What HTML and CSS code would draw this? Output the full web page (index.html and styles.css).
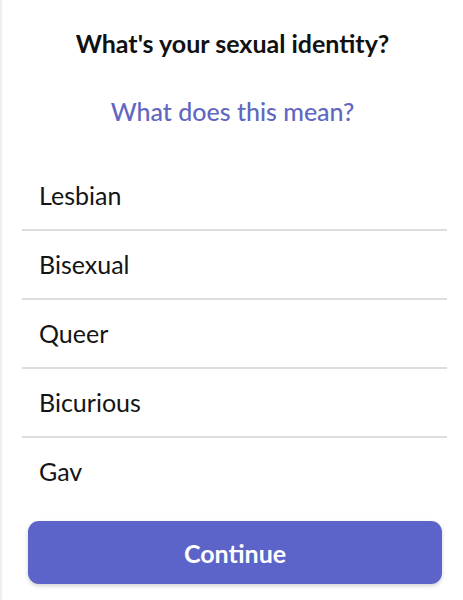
FILE: index.html
```html
<!DOCTYPE html>
<html>
<head>
<meta charset="utf-8">
<link rel="stylesheet" href="styles.css">
</head>
<body>
<div class="screen">
  <h1 class="title">What's your sexual identity?</h1>
  <a class="help">What does this mean?</a>
  <ul class="options">
    <li class="option">Lesbian</li>
    <li class="option">Bisexual</li>
    <li class="option">Queer</li>
    <li class="option">Bicurious</li>
    <li class="option">Gav</li>
  </ul>
  <div class="actions">
    <button class="continue">Continue</button>
  </div>
</div>
</body>
</html>
```

FILE: styles.css
```css
html, body {
  margin: 0;
  padding: 0;
  background: #ffffff;
}
.screen {
  width: 463px;
  height: 600px;
  box-sizing: border-box;
  border-left: 2px solid #efefef;
  font-family: Lato, "Noto Sans", sans-serif;
  display: flex;
  flex-direction: column;
  align-items: stretch;
}
.title {
  margin: 27px 0 0;
  text-align: center;
  font-size: 25px;
  font-weight: 700;
  color: #111111;
  line-height: 32px;
}
.help {
  margin-top: 36px;
  text-align: center;
  font-size: 25px;
  font-weight: 500;
  color: #6167c1;
  line-height: 32px;
}
.options {
  list-style: none;
  margin: 35px 16px 0 20px;
  padding: 0;
}
.option {
  height: 67px;
  line-height: 67px;
  padding-left: 17px;
  font-size: 25px;
  color: #141414;
  border-bottom: 2px solid #dddddd;
}
.option:last-child {
  border-bottom: none;
}
.actions {
  padding: 16px 21px 0 26px;
}
.continue {
  width: 100%;
  height: 63px;
  border: none;
  border-radius: 11px;
  background: #5d64c9;
  color: #ffffff;
  font-family: Lato, "Noto Sans", sans-serif;
  font-size: 25px;
  font-weight: 700;
  box-shadow: 0 2px 4px rgba(0,0,0,0.18);
}
```
